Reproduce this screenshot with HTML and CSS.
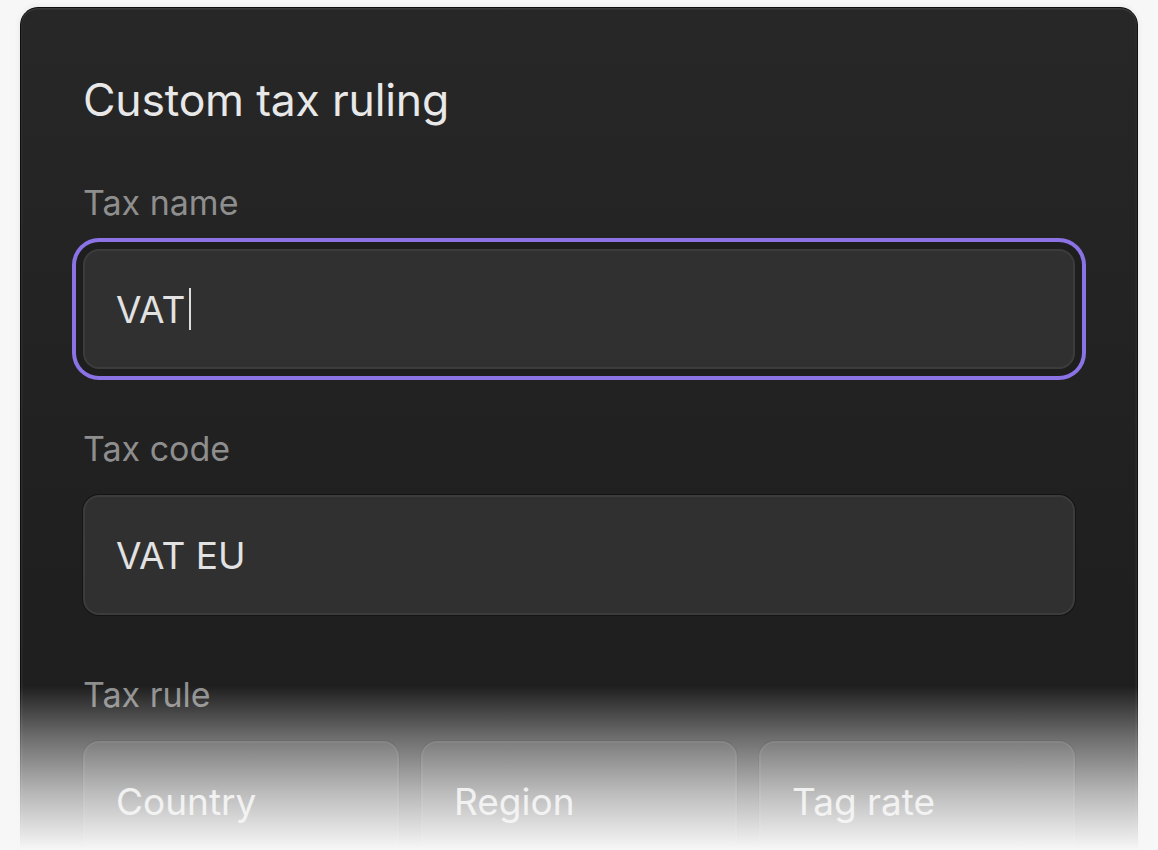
FILE: index.html
```html
<!DOCTYPE html>
<html>
<head>
<meta charset="utf-8">
<link rel="stylesheet" href="styles.css">
</head>
<body>
<div class="stage">
  <div class="card">
    <h1 class="title">Custom tax ruling</h1>
    <div class="field">
      <div class="label">Tax name</div>
      <div class="input focused"><span>VAT</span><span class="caret"></span></div>
    </div>
    <div class="field">
      <div class="label">Tax code</div>
      <div class="input"><span>VAT EU</span></div>
    </div>
    <div class="field">
      <div class="label">Tax rule</div>
      <div class="row">
        <div class="input small"><span>Country</span></div>
        <div class="input small"><span>Region</span></div>
        <div class="input small"><span>Tag rate</span></div>
      </div>
    </div>
  </div>
  <div class="fade"></div>
</div>
</body>
</html>
```
FILE: styles.css
```css
html, body {
  margin: 0;
  padding: 0;
  background: #f7f7f7;
  overflow: hidden;
  height: 850px;
}
.stage {
  position: relative;
  width: 1158px;
  height: 850px;
  overflow: hidden;
  font-family: Inter, "Noto Sans", sans-serif;
}
.card {
  box-sizing: border-box;
  margin: 7px 0 0 20px;
  width: 1118px;
  height: 960px;
  border-radius: 18px;
  border: 1.5px solid #0e0e0e;
  background: linear-gradient(#272727 0%, #1f1f1f 60%, #1d1d1d 100%);
  box-shadow: inset 0 1.5px 0 #3a3a3a, inset 1.5px 0 0 #2c2c2c, inset -1.5px 0 0 #2c2c2c, 0 0 6px rgba(0,0,0,0.08);
  padding: 64px 62px 0 62px;
  display: flex;
  flex-direction: column;
}
.title {
  margin: 0;
  font-weight: 400;
  font-size: 44.5px;
  line-height: 56px;
  color: #e8e8e8;
  letter-spacing: -0.2px;
}
.field {
  display: flex;
  flex-direction: column;
}
.title + .field { margin-top: 55px; }
.field + .field { margin-top: 60px; }
.label {
  font-size: 34px;
  line-height: 40px;
  color: #8e8e8e;
  margin-bottom: 26px;
}
.input {
  box-sizing: border-box;
  height: 120px;
  border-radius: 16px;
  border: 2px solid #3c3c3c;
  background: #303030;
  box-shadow: 0 0 0 1px #141414;
  display: flex;
  align-items: center;
  padding-left: 31px;
  font-size: 37px;
  color: #e2e2e2;
}
.input.focused {
  box-shadow: 0 0 0 7px #1e1e1e, 0 0 0 11px #8b73e6;
}
.caret {
  display: inline-block;
  width: 2px;
  height: 42px;
  background: #dddddd;
  margin-left: 4px;
}
.row {
  display: grid;
  grid-template-columns: 1fr 1fr 1fr;
  gap: 22px;
}
.fade {
  position: absolute;
  left: 0;
  right: 0;
  top: 686px;
  height: 164px;
  background: linear-gradient(rgba(247,247,247,0) 0%, rgba(247,247,247,0.35) 30%, rgba(247,247,247,0.7) 65%, rgba(247,247,247,1) 100%);
  pointer-events: none;
}
```
